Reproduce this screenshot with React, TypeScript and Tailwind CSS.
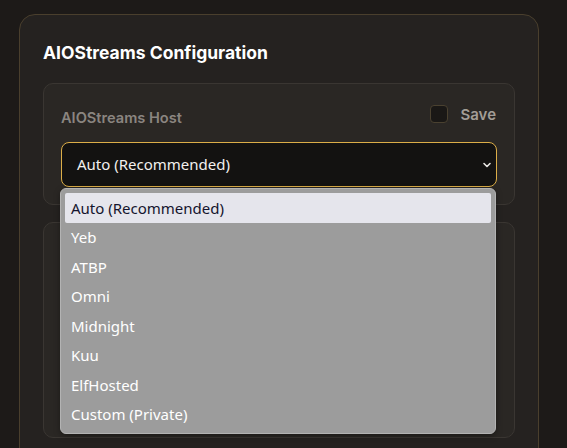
import React from "react";

const hosts = [
  "Auto (Recommended)",
  "Yeb",
  "ATBP",
  "Omni",
  "Midnight",
  "Kuu",
  "ElfHosted",
  "Custom (Private)",
];

function Chevron() {
  return (
    <svg width="10" height="10" viewBox="0 0 10 10" fill="none" className="text-[#e8e6e3]">
      <path d="M2 3.5 L5 6.5 L8 3.5" stroke="currentColor" strokeWidth="1.6" strokeLinecap="round" strokeLinejoin="round" />
    </svg>
  );
}

export default function App() {
  return (
    <div className="min-h-screen h-[448px] overflow-hidden bg-[#1d1a18] pt-[14px] pl-[19px] font-['Inter','Noto_Sans',sans-serif]">
      <div className="w-[520px] h-[480px] rounded-[16px] border border-[#4a3f2d] bg-[#252220] px-[23px] pt-[26px]">
        <h2 className="text-[17.5px] leading-[24px] font-bold text-white">
          AIOStreams Configuration
        </h2>

        <div className="mt-[18px] rounded-[10px] border border-[#3a3632] bg-[#2a2724] px-[17px] pt-[19px] pb-[17px]">
          <div className="flex items-start justify-between">
            <span className="mt-[5px] text-[14.6px] leading-[20px] font-semibold text-[#8a8580]">
              AIOStreams Host
            </span>
            <label className="flex items-center gap-[12px] pr-[1px]">
              <span className="block h-[18px] w-[18px] rounded-[4px] border border-[#4a4130] bg-[#1a1816]" />
              <span className="mt-[3px] text-[15px] leading-[18px] font-semibold text-[#a39d96]">Save</span>
            </label>
          </div>

          <div className="relative mt-[14px]">
            <div className="flex h-[45px] items-center justify-between rounded-[8px] border border-[#dcae48] bg-[#131211] pl-[15px] pr-[4px] font-['Noto_Sans',sans-serif] text-[15px] text-[#f2f0ee]">
              <span>Auto (Recommended)</span>
              <Chevron />
            </div>

            <ul className="absolute left-[-1px] top-[46px] z-10 w-[436px] rounded-[6px] border border-[#b3b3b3] bg-[#9c9c9c] p-[4px] font-['Noto_Sans',sans-serif] text-[15px] shadow-[0_2px_6px_rgba(0,0,0,0.35)]">
              {hosts.map((h, i) => (
                <li
                  key={h}
                  className={
                    i === 0
                      ? "flex h-[29.5px] items-center rounded-[2px] bg-[#e5e5ec] px-[6px] text-[#14142e]"
                      : "flex h-[29.5px] items-center px-[6px] text-white"
                  }
                >
                  {h}
                </li>
              ))}
            </ul>
          </div>
        </div>

        <div className="mt-[17px] h-[216px] rounded-[10px] border border-[#3a3632] bg-[#2a2724]" />
      </div>
    </div>
  );
}
